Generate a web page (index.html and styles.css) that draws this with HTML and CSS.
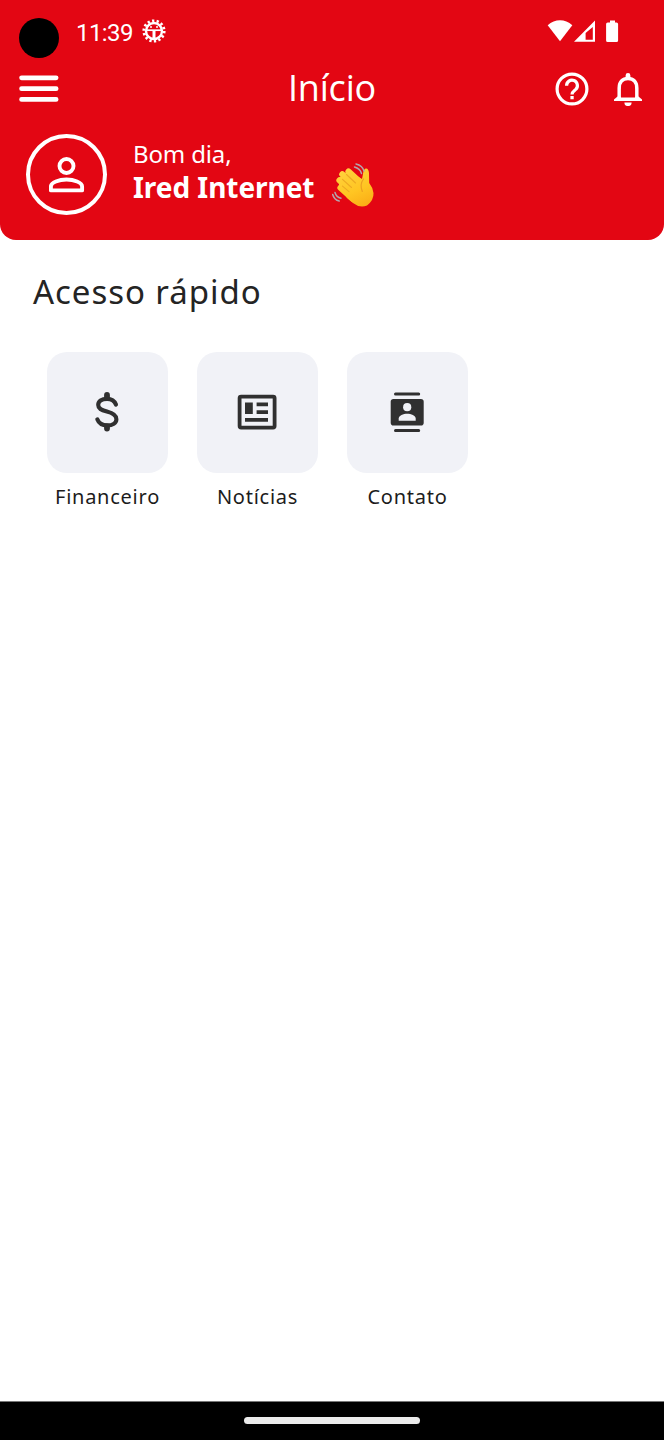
FILE: index.html
```html
<!DOCTYPE html>
<html lang="pt-BR">
<head>
<meta charset="utf-8">
<meta name="viewport" content="width=device-width">
<title>Início</title>
<link rel="stylesheet" href="styles.css">
</head>
<body>
<div class="screen">
  <header class="header">
    <div class="status">
      <span class="camera"></span>
      <span class="clock">11:39</span>
      <svg class="debug" width="24" height="24" viewBox="0 0 24 24" fill="none">
        <circle cx="12" cy="12" r="10.200" stroke="#fff" stroke-width="2.800" stroke-dasharray="2.300 2.278"/>
        <circle cx="12" cy="12" r="8" stroke="#fff" stroke-width="2.400"/>
        <path d="M5 11.200h14" stroke="#fff" stroke-width="1.700"/>
        <path d="M12 12v8" stroke="#fff" stroke-width="3"/>
        <circle cx="9" cy="8" r="1" fill="#fff"/><circle cx="15" cy="8" r="1" fill="#fff"/>
      </svg>
      <svg class="signals" width="74" height="24" viewBox="0 0 74 24" fill="#fff">
        <path d="M.7 5.200C8-1.400 18-1.400 25.300 5.200L13 21.200Z"/>
        <path fill-rule="evenodd" d="M48 0.500V21.800H27ZM45.800 7 38.600 13V19.700H45.800Z"/>
        <path d="M63 .5h5v2h1.500a1.600 1.600 0 0 1 1.600 1.600v16.300a1.600 1.600 0 0 1-1.600 1.600h-8.800a1.600 1.600 0 0 1-1.600-1.600V4.100a1.600 1.600 0 0 1 1.600-1.600h2.300z"/>
      </svg>
    </div>
    <nav class="appbar">
      <svg width="40" height="28" viewBox="0 0 40 28" stroke="#fff" stroke-width="4.800" stroke-linecap="round"><path d="M2.600 2.800H37.100M2.600 13.700H37.100M2.600 24.400H37.100"/></svg>
      <h1 class="title">Início</h1>
      <div class="actions">
        <svg width="34" height="34" viewBox="0 0 34 34" fill="none" stroke="#fff">
          <circle cx="17" cy="17" r="14.900" stroke-width="3.200"/>
          <path d="M11.600 13.700a5.400 5.400 0 1 1 9.200 3.700c-2 1.700-3.800 2.600-3.800 5.100" stroke-width="3.200"/>
          <path d="M15.400 24.100h3.300v3.200h-3.300z" fill="#fff" stroke="none"/>
        </svg>
        <svg width="28" height="34" viewBox="0 0 28 34" fill="none" stroke="#fff">
          <path d="M5.200 27.500V16C5.200 10 8.500 6.500 14 6.500s8.800 3.500 8.800 9.500V27.500" stroke-width="3.500"/>
          <path d="M0 29v-1.600l3.500-2.800h21l3.500 2.800v1.600z" fill="#fff" stroke="none"/>
          <path d="M6.950 17h14.100v8.500H6.950z" fill="#e30613" stroke="none"/>
          <path d="M11.600 6.500V3.500a2.400 2.400 0 0 1 4.800 0v3zM10.400 30.500h7.200a3.600 3.600 0 0 1-7.200 0z" fill="#fff" stroke="none"/>
        </svg>
      </div>
    </nav>
    <section class="profile">
      <span class="avatar">
        <svg width="36" height="36" viewBox="0 0 36 36" fill="none" stroke="#fff" stroke-width="3.900">
          <circle cx="17.500" cy="9" r="7"/>
          <path stroke-linejoin="round" d="M1.900 33.400V29.500C1.900 25.500 10 22.500 17.500 22.500s15.600 3 15.600 7v3.900z"/>
        </svg>
      </span>
      <div class="greeting">
        <span class="hello">Bom dia,</span>
        <strong class="name">Ired Internet</strong>
      </div>
      <svg class="wave" width="56" height="56" viewBox="0 0 56 56" fill="none" stroke-linecap="round">
        <defs><linearGradient id="skin" gradientUnits="userSpaceOnUse" x1="20" y1="10" x2="38" y2="48"><stop offset="0" stop-color="#ffd23d"/><stop offset=".6" stop-color="#ffc522"/><stop offset="1" stop-color="#fbae17"/></linearGradient></defs>
        <path d="M14 27 22 40 28 45Q35 50.500 42 47.500Q49 42 48.500 35Q47.500 29 44.200 25L44 15Q43.500 10.500 41.200 10.500Q38.500 10.500 38 16L37 21 24 13 14 20Z" fill="url(#skin)"/>
        <g stroke="url(#skin)" stroke-width="6.200"><path d="M23.500 13.500 37 26M17.300 16.300 32 30M14.500 22.300 29 36M15.500 29.800 28 41"/></g>
        <path d="M38.500 21c-3 4-3 8-1.200 12.500" stroke="#eda021" stroke-width="1.200"/>
        <path d="M21.500 16.500 30.500 25M17.500 21.300 26.500 29.500M17.500 28.200 24 33.700" stroke="#edaa22" stroke-width="1.100"/>
        <path d="M29.500 9c3.800 1 6 3 7 6.500M31 6c4 1 7 3.500 8 7M10 34.500c1 3.500 3.300 5.200 6 5.700M7.700 36.500c1 3.800 3.400 5.800 6.500 6.500" stroke="#b3a5ad" stroke-width="1.500"/>
      </svg>
    </section>
  </header>
  <main class="content">
    <h2 class="heading">Acesso rápido</h2>
    <div class="shortcuts">
      <div class="shortcut">
        <span class="tile">
          <svg width="41" height="43" viewBox="0 0 41 43" fill="none" stroke="#303030" stroke-linecap="round">
            <path d="M29 13.600C27.500 10 24.500 7.900 20.100 7.900 14.500 7.900 11.200 10.200 11.200 14c0 3.500 2.800 5 8.700 6.600 6.200 1.600 9.500 3.400 9.500 7.600 0 4-3.900 6.200-9.100 6.200-4.900 0-8.500-2.100-10-6.100" stroke-width="4.100"/>
            <path d="M20 4V7M20 35.500V37.500" stroke-width="5.800"/>
          </svg>
        </span>
        <span class="label">Financeiro</span>
      </div>
      <div class="shortcut">
        <span class="tile">
          <svg width="41" height="37" viewBox="0 0 41 37" fill="#303030">
            <rect x="2.600" y="2.600" width="35" height="31" rx="1.500" fill="none" stroke="#303030" stroke-width="3.800"/>
            <path d="M8 8.500h7.800V20H8zM19.600 8.500H31v3.800H19.600zM19.600 16.200H31V20H19.600zM8 24h23v3.800H8z"/>
          </svg>
        </span>
        <span class="label">Notícias</span>
      </div>
      <div class="shortcut">
        <span class="tile">
          <svg width="35" height="43" viewBox="0 0 35 43" fill="#303030">
            <path d="M5.500 3H28.700M5.500 39.500H28.700" stroke="#303030" stroke-width="3" stroke-linecap="round"/>
            <rect x=".7" y="8" width="33" height="26.500" rx="2.800"/>
            <circle cx="17.200" cy="16.200" r="4.100" fill="#f1f2f7"/>
            <path d="M8.700 29.700V27.500c0-3 4.700-4.700 8.500-4.700s8.500 1.700 8.500 4.700v2.200z" fill="#f1f2f7"/>
          </svg>
        </span>
        <span class="label">Contato</span>
      </div>
    </div>
  </main>
  <footer class="navbar"><span class="pill"></span></footer>
</div>
</body>
</html>
```
FILE: styles.css
```css
* { box-sizing: border-box; }
body { margin: 0; background: #fff; font-family: "Noto Sans", "Open Sans", sans-serif; }
svg { display: block; flex: none; }
.screen { width: 664px; height: 1440px; display: flex; flex-direction: column; }
.header { height: 240px; background: #e30613; border-radius: 0 0 16px 16px; color: #fff; }
.status { height: 68px; display: flex; align-items: flex-start; padding: 18px 43px 0 19px; }
.camera { width: 40px; height: 40px; border-radius: 50%; background: #000; }
.clock { margin-left: 17px; width: 57px; font: 24px/30px Roboto, sans-serif; letter-spacing: -.6px; white-space: nowrap; }
.debug { margin: 1px 0 0 9px; }
.signals { margin: 2px 0 0 auto; }
.appbar { height: 42px; display: grid; grid-template-columns: 100px 1fr 100px; align-items: center; padding: 0 22px 0 19px; }
.title { margin: -2px 0 0; padding-left: 3px; text-align: center; font: 400 36px/42px "Open Sans", sans-serif; letter-spacing: -.2px; }
.actions { display: flex; justify-content: flex-end; align-items: center; gap: 25px; }
.profile { display: flex; align-items: flex-start; padding: 24px 0 0 26px; }
.avatar { width: 81px; height: 81px; border: 4px solid #fff; border-radius: 50%; display: flex; align-items: center; justify-content: center; }
.greeting { width: 182px; margin: 3px 0 0 26px; display: flex; flex-direction: column; white-space: nowrap; }
.hello { font-size: 24px; line-height: 33px; letter-spacing: -.15px; }
.name { font-size: 28px; line-height: 34px; font-weight: 700; letter-spacing: -.05px; }
.wave { margin: 24px 0 0 10px; }
.content { flex: 1; padding: 30px 33px; color: #242424; }
.heading { margin: 0; font-size: 33px; line-height: 44px; font-weight: 450; letter-spacing: .95px; white-space: nowrap; }
.shortcuts { display: flex; gap: 29px; padding: 38px 0 0 14px; }
.shortcut { width: 121px; display: flex; flex-direction: column; align-items: center; }
.tile { width: 121px; height: 121px; border-radius: 20px; background: #f1f2f7; display: flex; align-items: center; justify-content: center; }
.label { margin-top: 10px; font-size: 20px; line-height: 28px; font-weight: 450; letter-spacing: .75px; color: #1c1c1c; white-space: nowrap; }
.navbar { height: 39px; background: #000; border-top: 1px solid #777; display: flex; justify-content: center; padding-top: 15px; }
.pill { width: 176px; height: 7px; border-radius: 4px; background: #ebebeb; }
```
